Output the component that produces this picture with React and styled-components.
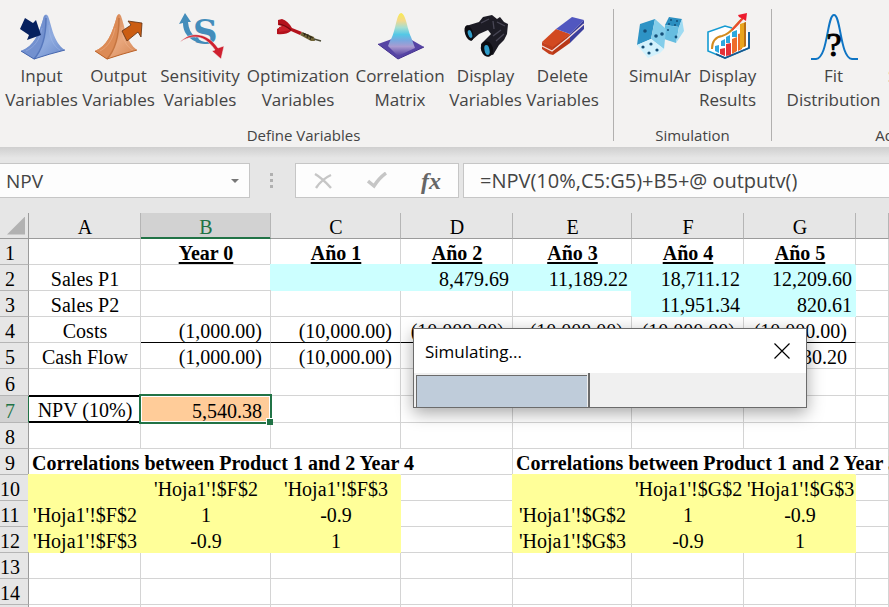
import React, { useState } from "react";
import styled, { createGlobalStyle, css } from "styled-components";

const GlobalStyle = createGlobalStyle`
  *,
  *::before,
  *::after {
    box-sizing: border-box;
  }

  body {
    margin: 0;
    background: #e6e6e6;
    font-family: "Open Sans", "Noto Sans", sans-serif;
  }

  button {
    font-family: inherit;
    border: none;
    background: transparent;
    padding: 0;
    cursor: pointer;
  }
`;

const Window = styled.div`
  height: 100vh;
  display: flex;
  flex-direction: column;
  overflow: hidden;
`;

/* ---------- ribbon ---------- */

const Ribbon = styled.header`
  display: flex;
  flex: none;
  padding: 9px 0 6px;
  background: #f3f2f1;
  color: #444;
`;

const Group = styled.section`
  flex: none;
  display: flex;
  flex-direction: column;
  justify-content: space-between;
  width: ${({ $width }) => $width}px;
  height: 132px;
  padding: 3px ${({ $right }) => $right}px 0 ${({ $left }) => $left}px;
  border-right: 1px solid #b1b0af;
`;

const GroupButtons = styled.div`
  display: flex;
  align-items: flex-start;
`;

const GroupLabel = styled.div`
  font-size: 15px;
  line-height: 12px;
  text-align: center;
  white-space: nowrap;
`;

const RibbonButton = styled.button`
  flex: none;
  display: flex;
  flex-direction: column;
  align-items: center;
  width: ${({ $width }) => $width}px;
  font-size: 17px;
  line-height: 24px;
  color: #444;

  &:hover {
    background: #e1dfdd;
  }
`;

const IconSvg = styled.svg`
  display: block;
  width: 48px;
  height: 48px;
  margin-bottom: 4px;
  overflow: visible;
`;

/* ---------- formula bar ---------- */

const FormulaBar = styled.div`
  display: flex;
  flex: none;
  padding: 16px 0 15px;
  background: linear-gradient(#cfcfcf, #e6e6e6 11px);
`;

const boxStyle = css`
  height: 35px;
  background: #fdfdfd;
  border: 1px solid #c6c6c6;
`;

const NameBox = styled.div`
  ${boxStyle}
  display: flex;
  width: 250px;
  border-left: none;
`;

const TextInput = styled.input`
  flex: 1;
  min-width: 0;
  border: none;
  outline: none;
  background: transparent;
  padding: 0 0 0 6px;
  font-family: inherit;
  font-size: 19px;
  color: #444;
`;

const NameArrow = styled.button`
  width: 28px;

  &::after {
    content: "";
    display: block;
    width: 8px;
    margin: 0 auto;
    border: 4px solid transparent;
    border-top-color: #777;
    border-bottom: none;
  }
`;

const Grip = styled.div`
  display: flex;
  flex-direction: column;
  justify-content: center;
  align-items: center;
  gap: 3px;
  width: 45px;
  padding-right: 2px;

  span {
    width: 3px;
    height: 3px;
    background: #b0b0b0;
  }
`;

const EntryButtons = styled.div`
  ${boxStyle}
  display: flex;
  width: 164px;
  margin-right: 4px;
`;

const EntryButton = styled.button`
  flex: 1;
  display: flex;
  align-items: center;
  justify-content: center;
  color: #666;
  font-family: "Liberation Serif", serif;
  font-size: 24px;
  font-style: italic;
  font-weight: bold;
  line-height: 28px;
`;

const FormulaBox = styled.div`
  ${boxStyle}
  flex: 1;
  display: flex;
  border-right: none;
`;

const FormulaInput = styled(TextInput)`
  padding-left: 16px;
  font-size: 20px;
`;

/* ---------- sheet ---------- */

const SheetArea = styled.main`
  position: relative;
  flex: 1;
  min-height: 0;
  overflow: hidden;
  background: #fff;
`;

const SheetTable = styled.table`
  width: 100%;
  table-layout: fixed;
  border-collapse: separate;
  border-spacing: 0;
  font-family: "Liberation Serif", serif;
  font-size: 20px;
  line-height: 22px;
  color: #000;
`;

const ColHead = styled.th`
  height: 26px;
  padding: 3px 0 0 1px;
  font-weight: normal;
  color: ${({ $active }) => ($active ? "#217346" : "#000")};
  background: ${({ $active }) => ($active ? "#d2d2d2" : "#e6e6e6")};
  border-right: 1px solid #b5b5b5;
  border-bottom: 1px solid ${({ $active }) => ($active ? "#217346" : "#9b9b9b")};
  box-shadow: ${({ $active }) => ($active ? "inset 0 -1px #217346" : "none")};
`;

const Corner = styled(ColHead)`
  padding: 0 3px 0 0;
  border-right-color: #9b9b9b;

  &::after {
    content: "";
    display: block;
    width: 18px;
    height: 18px;
    margin-left: auto;
    background: #b2b2b2;
    clip-path: polygon(100% 0, 100% 100%, 0 100%);
  }
`;

const RowHead = styled.th`
  padding: 3px 8px 0 0;
  font-weight: normal;
  text-align: center;
  color: ${({ $active }) => ($active ? "#217346" : "#000")};
  background: ${({ $active }) => ($active ? "#d2d2d2" : "#e6e6e6")};
  border-right: 1px solid ${({ $active }) => ($active ? "#217346" : "#9b9b9b")};
  border-bottom: 1px solid #b5b5b5;
`;

const fills = {
  cyan: "#ccffff",
  yellow: "#ffff99",
  orange: "#ffcc99",
};

const Cell = styled.td`
  height: ${({ $height }) => $height}px;
  padding: 3px 2px 0 3px;
  white-space: nowrap;
  text-align: ${({ $align }) => $align || "center"};
  border-right: 1px solid #d4d4d4;
  border-bottom: 1px solid #d4d4d4;

  ${({ $align }) => $align === "right" && "padding-right: 3px;"}

  ${({ $fill }) =>
    $fill &&
    css`
      background: ${fills[$fill]};
      border-color: ${fills[$fill]};
      box-shadow: -1px -1px ${fills[$fill]};
    `}

  ${({ $money }) =>
    $money &&
    css`
      padding-right: 8px;
      text-align: right;
    `}

  ${({ $spill }) => $spill && "border-right-color: transparent;"}
  ${({ $bold }) => $bold && "font-weight: bold;"}
  ${({ $total }) => $total && "border-bottom-color: #000;"}

  ${({ $heading }) =>
    $heading &&
    css`
      font-weight: bold;
      text-decoration: underline;
      text-decoration-thickness: 2px;
      text-decoration-skip-ink: none;
      text-underline-offset: 2px;
    `}

  ${({ $boxed }) =>
    $boxed &&
    css`
      border-bottom: 2px solid #000;
      box-shadow: 0 -1px #000, inset 0 1px #000;
    `}

  ${({ $selected }) =>
    $selected &&
    css`
      position: relative;
      box-shadow: none;

      &::before {
        content: "";
        position: absolute;
        inset: -2px;
        border: 2px solid #217346;
        box-shadow: inset 0 0 0 1px #fff;
      }

      &::after {
        content: "";
        position: absolute;
        right: -3px;
        bottom: -3px;
        width: 7px;
        height: 7px;
        background: #217346;
        border: solid #fff;
        border-width: 1px 0 0 1px;
      }
    `}
`;

/* ---------- progress dialog ---------- */

const Dialog = styled.div`
  position: absolute;
  top: 115px;
  left: 413px;
  width: 394px;
  background: #f0f0f0;
  border: 1px solid #6b6b6b;
  box-shadow: 0 5px 16px rgba(0, 0, 0, 0.35);
`;

const DialogTitle = styled.div`
  display: flex;
  align-items: center;
  justify-content: space-between;
  height: 44px;
  padding: 0 10px 0 11px;
  background: #fff;
  color: #000;
  font-size: 17px;
`;

const CloseButton = styled.button`
  display: flex;
  align-items: center;
  justify-content: center;
  width: 28px;
  height: 28px;
`;

const ProgressTrack = styled.div`
  height: 34px;
  padding-left: 2px;
`;

const ProgressFill = styled.div`
  height: 100%;
  padding-top: 2px;
  border-right: 2px solid #6b6b6b;

  &::after {
    content: "";
    display: block;
    height: 100%;
    margin-right: 1px;
    background: #bfccda;
    border: 1px solid #6b6b6b;
    border-width: 1px 0 0 1px;
  }
`;

/* ---------- icons ---------- */

const Icon = ({ children }) => (
  <IconSvg viewBox="0 0 48 48" aria-hidden="true">
    {children}
  </IconSvg>
);

const InputIcon = () => (
  <Icon>
    <defs>
      <linearGradient id="inRight" x1="0" y1="0" x2="1" y2="1">
        <stop offset="0" stopColor="#6f8fce" />
        <stop offset="0.6" stopColor="#8fabdf" />
        <stop offset="1" stopColor="#6687c9" />
      </linearGradient>
    </defs>
    <path d="M26 4Q28 1 30 4C34 14 35 30 47 38Q31 42 16 47L3 39C16 34 21 22 26 4Z" fill="url(#inRight)" />
    <path d="M28 3C27 18 27 34 16 47L3 39C16 34 21 22 26 4Z" fill="#7391cf" />
    <path d="M28 6C28 24 25 37 16 47" fill="none" stroke="#5778bd" strokeWidth="1.5" />
    <path d="M24 16C22 27 17 35 8 39M31 13C31 26 36 35 42 38" fill="none" stroke="#a9bfeb" strokeWidth="1" opacity="0.4" />
    <path d="M3 39L16 47Q31 42 47 38" fill="none" stroke="#4566ae" strokeWidth="1" />
    <path d="M7 6L15 11L18 8L23 23L9 28L11 23L2 17Z" fill="#06215f" />
  </Icon>
);

const OutputIcon = () => (
  <Icon>
    <defs>
      <linearGradient id="outRight" x1="0" y1="0" x2="1" y2="1">
        <stop offset="0" stopColor="#cf7c47" />
        <stop offset="0.6" stopColor="#e8a77d" />
        <stop offset="1" stopColor="#d58551" />
      </linearGradient>
    </defs>
    <path d="M22 4Q24 0 26 4C30 15 31 30 42 38Q27 42 12 47L0 39C12 34 17 22 22 4Z" fill="url(#outRight)" />
    <path d="M24 3C23 18 23 34 12 47L0 39C12 34 17 22 22 4Z" fill="#dc8b56" />
    <path d="M24 6C24 24 21 37 12 47" fill="none" stroke="#c67540" strokeWidth="1.5" />
    <path d="M20 16C18 27 13 35 5 39M27 15C27 26 31 35 38 38" fill="none" stroke="#f2bf9e" strokeWidth="1" opacity="0.4" />
    <path d="M0 39L12 47Q27 42 42 38" fill="none" stroke="#ba6127" strokeWidth="1" />
    <path d="M27 19L36 13L33 9L47 11L46 25L43 20L32 29Z" fill="#cb5d12" stroke="#5d3013" strokeWidth="0.8" />
  </Icon>
);

const SensitivityIcon = () => (
  <Icon>
    <text
      x="17"
      y="32"
      fontFamily="'DejaVu Serif', serif"
      fontSize="34"
      fontWeight="bold"
      fill="#438dbb"
    >
      S
    </text>
    <path d="M9 1L3 12L7 11C7 24 18 33 35 31C22 30 13 23 12 10L15 10Z" fill="#438dbb" />
    <path d="M4 30C14 19 31 20 42 36L48 34L45 47L36 39L39 38C30 24 17 21 4 30Z" fill="#cf202f" stroke="#f3f2f1" strokeWidth="0.5" />
  </Icon>
);

const DartIcon = () => (
  <Icon>
    <path d="M4 8L8 7Q14 9 18 16L28 20L26 23L17 19Q12 23 3 22L3 17L8 14L4 13Z" fill="#b3121c" />
    <path d="M5 15L10 14L17 18L5 20Z" fill="#c9202a" />
    <path d="M5 12Q11 13 17 18" fill="none" stroke="#75090f" strokeWidth="1.2" />
    <path d="M28 20L40 25L41 29L37 29L26 23Z" fill="#706437" />
    <path d="M29 21L39 26M31 21L30 24M34 22L33 26M37 24L36 28" stroke="#2d2818" strokeWidth="1" />
    <path d="M40 27L47 29" stroke="#4c4c39" strokeWidth="1.4" />
  </Icon>
);

const CorrelationIcon = () => (
  <Icon>
    <defs>
      <linearGradient id="bell" x1="0" y1="0" x2="0" y2="1">
        <stop offset="0" stopColor="#f7ec50" />
        <stop offset="0.18" stopColor="#f3d88c" />
        <stop offset="0.34" stopColor="#a4ded2" />
        <stop offset="0.5" stopColor="#54c8e6" />
        <stop offset="0.64" stopColor="#7aa7df" />
        <stop offset="0.78" stopColor="#a99bd1" />
        <stop offset="1" stopColor="#54409f" />
      </linearGradient>
    </defs>
    <path d="M2 32L16 27H34L48 35L22 47Z" fill="#5644a4" />
    <path d="M25 1C20 2 20 20 14 29L12 34L22 44L39 36L35 25C31 16 30 2 25 1Z" fill="url(#bell)" />
    <path d="M2 32L22 47L48 35" fill="none" stroke="#43308e" strokeWidth="1" />
  </Icon>
);

const BinocularsIcon = () => (
  <Icon>
    <path d="M4 14L17 10L21 5L30 3L35 7L38 5L42 10L46 12L45 22L42 28L37 33L31 43L20 40L19 32L29 22L26 18L17 22L9 29Z" fill="#1d1c25" />
    <ellipse cx="7" cy="21" rx="4" ry="8" transform="rotate(-18 7 21)" fill="#0d0d12" />
    <ellipse cx="8" cy="22" rx="2" ry="4" transform="rotate(-18 8 22)" fill="#2f9cc9" />
    <ellipse cx="25" cy="37" rx="6" ry="8" transform="rotate(-18 25 37)" fill="#0d0d12" />
    <ellipse cx="25" cy="38" rx="2.5" ry="5" transform="rotate(-12 25 38)" fill="#2f9cc9" />
    <path d="M19 11L27 7M31 9L32 17M35 10L43 14M31 24L39 18M34 29L42 22" stroke="#484655" strokeWidth="1.3" fill="none" />
  </Icon>
);

const EraserIcon = () => (
  <Icon>
    <path d="M3 30L17 17L31 22L14 36Z" fill="#d24920" />
    <path d="M17 17L33 5L45 8L31 22Z" fill="#5157c0" />
    <path d="M3 30L14 35L14 43L10 42L3 37Z" fill="#c4401d" />
    <path d="M14 35L31 22V31L14 43Z" fill="#b93816" />
    <path d="M31 22L45 8V17L31 31Z" fill="#3c3f9d" />
    <path d="M3 34L13 39L28 27L45 12" fill="none" stroke="#f1dfdc" strokeWidth="1.3" />
  </Icon>
);

const DiceIcon = () => (
  <Icon>
    <path d="M33 5L46 7L43 15L29 13Z" fill="#2b8fc1" />
    <path d="M29 13L43 15L40 31L28 27Z" fill="#66bde0" />
    <path d="M46 7L48 19L40 31L43 15Z" fill="#9edbf2" />
    <path d="M4 12L19 7L15 27L1 33Z" fill="#2e93c5" />
    <path d="M19 7L30 17L28 37L15 27Z" fill="#83cdea" />
    <path d="M1 33L15 27L28 37L24 41L12 46Z" fill="#d2f1fc" />
    <g fill="#154f78">
      <circle cx="9" cy="19" r="1.8" />
      <circle cx="20" cy="24" r="1.8" />
      <circle cx="26" cy="22" r="1.8" />
      <circle cx="7" cy="35" r="1.6" />
      <circle cx="15" cy="32" r="1.6" />
      <circle cx="13" cy="41" r="1.6" />
      <circle cx="21" cy="38" r="1.6" />
      <circle cx="35" cy="8" r="1" />
      <circle cx="41" cy="9" r="1" />
      <circle cx="33" cy="12" r="1" />
      <circle cx="39" cy="13" r="1" />
      <circle cx="32" cy="18" r="1" />
      <circle cx="40" cy="25" r="1.4" />
    </g>
  </Icon>
);

const ResultsIcon = () => (
  <Icon>
    <path d="M45 20V36L21 46L4 39V20L21 14L28 16" fill="#fff" stroke="#159bd2" strokeWidth="1.6" />
    <path d="M45 20V36L21 46L12 42" fill="none" stroke="#17588e" strokeWidth="1.8" />
    <path d="M11 34L15 33V41L11 39ZM17 29L21 27V34H17ZM22 25L26 23V31H22ZM28 20L33 18V25H28Z" fill="#2ea7df" />
    <path d="M16 37L21 36V44L16 42ZM22 32L27 31V43L22 44Z" fill="#e53138" />
    <path d="M28 27L33 25V39L28 42ZM34 22L38 21V37L34 39Z" fill="#ee6c2b" />
    <path d="M36 12L42 10V34L36 37Z" fill="#e9a51e" />
    <path d="M40 11L42 10V34L40 35Z" fill="#b96f15" />
    <path d="M8 37C8 28 12 25 18 24C27 22 30 14 38 7" fill="none" stroke="#d38b1d" strokeWidth="2" />
    <path d="M28 18Q34 12 39 6" fill="none" stroke="#e94a2e" strokeWidth="2" />
    <path d="M43 1L42 9L39 7L35 5L34 3Z" fill="#ed1c2e" />
  </Icon>
);

const FitIcon = () => (
  <Icon>
    <path
      d="M1 47H6C18 46 17 3 24 3S30 46 42 47H48"
      fill="none"
      stroke="#0f75c4"
      strokeWidth="2"
    />
    <text
      x="24"
      y="44"
      textAnchor="middle"
      fontFamily="'Liberation Serif', serif"
      fontSize="34"
      stroke="#000"
      strokeWidth="1"
    >
      ?
    </text>
  </Icon>
);

/* ---------- data ---------- */

const groups = [
  {
    label: "Define Variables",
    width: 614,
    left: 3,
    right: 9,
    buttons: [
      { lines: ["Input", "Variables"], width: 77, icon: InputIcon },
      { lines: ["Output", "Variables"], width: 77, icon: OutputIcon },
      { lines: ["Sensitivity", "Variables"], width: 86, icon: SensitivityIcon },
      { lines: ["Optimization", "Variables"], width: 110, icon: DartIcon },
      { lines: ["Correlation", "Matrix"], width: 94, icon: CorrelationIcon },
      { lines: ["Display", "Variables"], width: 77, icon: BinocularsIcon },
      { lines: ["Delete", "Variables"], width: 77, icon: EraserIcon },
    ],
  },
  {
    label: "Simulation",
    width: 158,
    left: 11,
    right: 11,
    buttons: [
      { lines: ["SimulAr"], width: 70, icon: DiceIcon },
      { lines: ["Display", "Results"], width: 65, icon: ResultsIcon },
    ],
  },
  {
    label: "Advanced",
    width: 276,
    left: 11,
    right: 11,
    buttons: [
      { lines: ["Fit", "Distribution"], width: 101, icon: FitIcon },
      { lines: ["Settings"], width: 71, icon: Icon },
    ],
  },
];

const columns = ["A", "B", "C", "D", "E", "F", "G", ""];
const columnWidths = [29, 112, 130, 130, 112, 119, 112, 112];

const head = (text) => ({ text, heading: true });
const text = (value) => ({ text: value });
const money = (value, extra) => ({ text: value, money: true, ...extra });
const cyan = (value) => ({ text: value, fill: "cyan", align: "right" });
const yellow = (value) => ({ text: value, fill: "yellow" });
const title = (value) => ({ text: value, bold: true, align: "left", spill: true });
const total = { total: true };
const spill = { spill: true };

const rows = [
  [{}, head("Year 0"), head("Año 1"), head("Año 2"), head("Año 3"), head("Año 4"), head("Año 5"), {}],
  [text("Sales P1"), {}, cyan(), cyan("8,479.69"), cyan("11,189.22"), cyan("18,711.12"), cyan("12,209.60"), {}],
  [text("Sales P2"), {}, {}, {}, {}, cyan("11,951.34"), cyan("820.61"), {}],
  [
    text("Costs"),
    money("(1,000.00)", total),
    money("(10,000.00)", total),
    money("(10,000.00)", total),
    money("(10,000.00)", total),
    money("(10,000.00)", total),
    money("(10,000.00)", total),
    {},
  ],
  [text("Cash Flow"), money("(1,000.00)"), money("(10,000.00)"), {}, {}, {}, money("30.20"), {}],
  [{}, {}, {}, {}, {}, {}, {}, {}],
  [
    { text: "NPV (10%)", boxed: true },
    money("5,540.38", { fill: "orange", selected: true }),
    {}, {}, {}, {}, {}, {},
  ],
  [{}, {}, {}, {}, {}, {}, {}, {}],
  [
    title("Correlations between Product 1 and 2 Year 4"),
    spill, spill, {},
    title("Correlations between Product 1 and 2 Year 5"),
    spill, spill, {},
  ],
  [yellow(), yellow("'Hoja1'!$F$2"), yellow("'Hoja1'!$F$3"), {}, yellow(), yellow("'Hoja1'!$G$2"), yellow("'Hoja1'!$G$3"), {}],
  [yellow("'Hoja1'!$F$2"), yellow("1"), yellow("-0.9"), {}, yellow("'Hoja1'!$G$2"), yellow("1"), yellow("-0.9"), {}],
  [yellow("'Hoja1'!$F$3"), yellow("-0.9"), yellow("1"), {}, yellow("'Hoja1'!$G$3"), yellow("-0.9"), yellow("1"), {}],
  [{}, {}, {}, {}, {}, {}, {}, {}],
  [{}, {}, {}, {}, {}, {}, {}, {}],
  [{}, {}, {}, {}, {}, {}, {}, {}],
];

// rows 6 and 7 are one pixel taller than the rest
const rowHeight = (number) => (number === 6 || number === 7 ? 27 : 26);

const App = () => {
  const [name, setName] = useState("NPV");
  const [formula, setFormula] = useState("=NPV(10%,C5:G5)+B5+@ outputv()");
  const [simulating, setSimulating] = useState(true);
  const progress = 44.5;

  return (
    <Window>
      <GlobalStyle />
      <Ribbon>
        {groups.map((group) => (
          <Group key={group.label} $width={group.width} $left={group.left} $right={group.right}>
            <GroupButtons>
              {group.buttons.map(({ lines, width, icon: ButtonIcon }) => (
                <RibbonButton key={lines.join(" ")} type="button" $width={width}>
                  <ButtonIcon />
                  {lines.map((line) => (
                    <span key={line}>{line}</span>
                  ))}
                </RibbonButton>
              ))}
            </GroupButtons>
            <GroupLabel>{group.label}</GroupLabel>
          </Group>
        ))}
      </Ribbon>

      <FormulaBar>
        <NameBox>
          <TextInput aria-label="Name box" value={name} onChange={(e) => setName(e.target.value)} />
          <NameArrow type="button" aria-label="Show names" />
        </NameBox>
        <Grip>
          <span />
          <span />
          <span />
        </Grip>
        <EntryButtons>
          <EntryButton type="button" aria-label="Cancel">
            <svg width="18" height="16" viewBox="0 0 18 16">
              <path d="M1 1Q8 5 17 15M17 2Q8 6 2 15" fill="none" stroke="#c6c6c6" strokeWidth="2.4" />
            </svg>
          </EntryButton>
          <EntryButton type="button" aria-label="Enter">
            <svg width="20" height="17" viewBox="0 0 20 17">
              <path d="M1 9L7 14Q12 6 19 1" fill="none" stroke="#c6c6c6" strokeWidth="3.4" />
            </svg>
          </EntryButton>
          <EntryButton type="button" aria-label="Insert function">
            fx
          </EntryButton>
        </EntryButtons>
        <FormulaBox>
          <FormulaInput
            aria-label="Formula"
            value={formula}
            onChange={(e) => setFormula(e.target.value)}
          />
        </FormulaBox>
      </FormulaBar>

      <SheetArea>
        <SheetTable>
          <colgroup>
            {columnWidths.map((width, i) => (
              <col key={i} width={width} />
            ))}
            <col />
          </colgroup>
          <thead>
            <tr>
              <Corner aria-label="Select all" />
              {columns.map((column, i) => (
                <ColHead key={i} scope="col" $active={column === "B"}>
                  {column}
                </ColHead>
              ))}
            </tr>
          </thead>
          <tbody>
            {rows.map((cells, r) => (
              <tr key={r}>
                <RowHead scope="row" $active={r === 6}>
                  {r + 1}
                </RowHead>
                {cells.map((cell, c) => (
                  <Cell
                    key={c}
                    $height={rowHeight(r + 1)}
                    $align={cell.align}
                    $fill={cell.fill}
                    $money={cell.money}
                    $bold={cell.bold}
                    $heading={cell.heading}
                    $total={cell.total}
                    $spill={cell.spill}
                    $boxed={cell.boxed}
                    $selected={cell.selected}
                  >
                    {cell.text}
                  </Cell>
                ))}
              </tr>
            ))}
          </tbody>
        </SheetTable>

        {simulating && (
          <Dialog role="dialog" aria-labelledby="dialog-title">
            <DialogTitle>
              <span id="dialog-title">Simulating...</span>
              <CloseButton type="button" aria-label="Close" onClick={() => setSimulating(false)}>
                <svg width="16" height="16" viewBox="0 0 16 16">
                  <path d="M0.5 0.5L15.5 15.5M15.5 0.5L0.5 15.5" stroke="#000" strokeWidth="1.2" />
                </svg>
              </CloseButton>
            </DialogTitle>
            <ProgressTrack>
              <ProgressFill
                role="progressbar"
                aria-label="Simulation progress"
                aria-valuenow={progress}
                aria-valuemin={0}
                aria-valuemax={100}
                style={{ width: `${progress}%` }}
              />
            </ProgressTrack>
          </Dialog>
        )}
      </SheetArea>
    </Window>
  );
};

export default App;
